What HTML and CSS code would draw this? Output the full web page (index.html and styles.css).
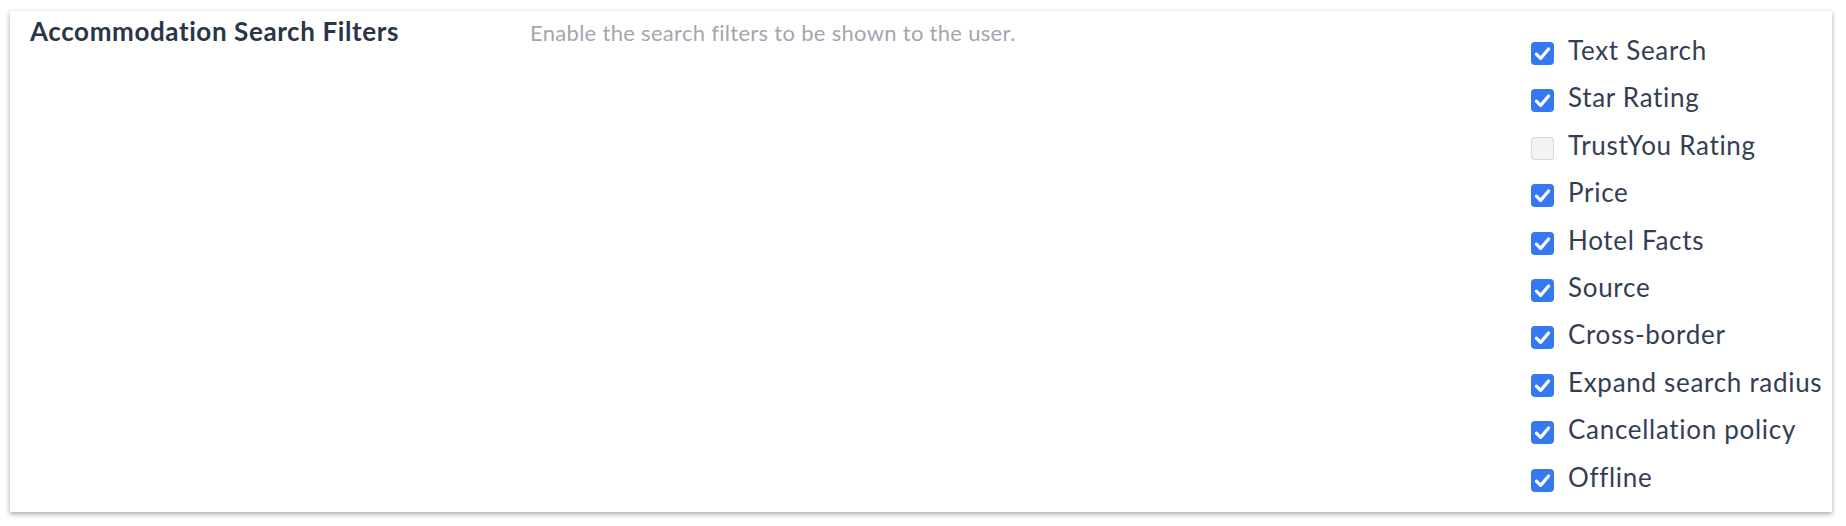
FILE: index.html
```html
<!DOCTYPE html>
<html lang="en">
<head>
<meta charset="utf-8">
<title>Accommodation Search Filters</title>
<link rel="stylesheet" href="styles.css">
</head>
<body>
<section class="card">
  <h2 class="title">Accommodation Search Filters</h2>
  <p class="desc">Enable the search filters to be shown to the user.</p>
  <ul class="options">
    <li class="option"><span class="box checked"><svg viewBox="0 0 23 23"><path d="M5.4 12.2 L9.6 16.4 L17.6 7"/></svg></span><span class="label">Text Search</span></li>
    <li class="option"><span class="box checked"><svg viewBox="0 0 23 23"><path d="M5.4 12.2 L9.6 16.4 L17.6 7"/></svg></span><span class="label">Star Rating</span></li>
    <li class="option"><span class="box"></span><span class="label">TrustYou Rating</span></li>
    <li class="option"><span class="box checked"><svg viewBox="0 0 23 23"><path d="M5.4 12.2 L9.6 16.4 L17.6 7"/></svg></span><span class="label">Price</span></li>
    <li class="option"><span class="box checked"><svg viewBox="0 0 23 23"><path d="M5.4 12.2 L9.6 16.4 L17.6 7"/></svg></span><span class="label">Hotel Facts</span></li>
    <li class="option"><span class="box checked"><svg viewBox="0 0 23 23"><path d="M5.4 12.2 L9.6 16.4 L17.6 7"/></svg></span><span class="label">Source</span></li>
    <li class="option"><span class="box checked"><svg viewBox="0 0 23 23"><path d="M5.4 12.2 L9.6 16.4 L17.6 7"/></svg></span><span class="label">Cross-border</span></li>
    <li class="option"><span class="box checked"><svg viewBox="0 0 23 23"><path d="M5.4 12.2 L9.6 16.4 L17.6 7"/></svg></span><span class="label">Expand search radius</span></li>
    <li class="option"><span class="box checked"><svg viewBox="0 0 23 23"><path d="M5.4 12.2 L9.6 16.4 L17.6 7"/></svg></span><span class="label">Cancellation policy</span></li>
    <li class="option"><span class="box checked"><svg viewBox="0 0 23 23"><path d="M5.4 12.2 L9.6 16.4 L17.6 7"/></svg></span><span class="label">Offline</span></li>
  </ul>
</section>
</body>
</html>
```
FILE: styles.css
```css
* { box-sizing: border-box; }
html, body { margin: 0; padding: 0; background: #ffffff; }
body {
  height: 526px;
  padding-top: 11px;
  font-family: Lato, "Noto Sans", "Liberation Sans", sans-serif;
}

.card {
  margin: 0 14px 0 10px;
  height: 501px;
  background: #ffffff;
  box-shadow: 0 2px 5px rgba(0, 0, 0, 0.35);
  display: grid;
  grid-template-columns: 500px 1fr 291px;
  align-items: start;
  padding: 6px 10px 20px 20px;
}

.title {
  margin: 0;
  font-size: 26px;
  line-height: 28px;
  font-weight: 700;
  color: #2b3548;
  letter-spacing: 0.6px;
}

.desc {
  margin: 1px 0 0 0;
  font-size: 22px;
  line-height: 30px;
  color: #a3a6af;
  letter-spacing: 0.3px;
}

.options {
  list-style: none;
  margin: 25px 0 0 0;
  padding: 0;
  display: flex;
  flex-direction: column;
  gap: 24.4px;
}

.option {
  display: flex;
  align-items: flex-start;
  gap: 14px;
  height: 23px;
}

.box {
  flex: 0 0 23px;
  width: 23px;
  height: 23px;
  border-radius: 4px;
  background: #f3f3f4;
  box-shadow: inset 0 0 0 1px #d9d9dc;
  display: flex;
}

.box.checked {
  background: #3479f1;
  box-shadow: none;
}

.box svg {
  width: 23px;
  height: 23px;
}

.box svg path {
  fill: none;
  stroke: #ffffff;
  stroke-width: 3.2;
  stroke-linecap: round;
  stroke-linejoin: round;
}

.label {
  font-size: 26px;
  line-height: 16px;
  color: #333e55;
  white-space: nowrap;
  letter-spacing: 0.7px;
}
```
